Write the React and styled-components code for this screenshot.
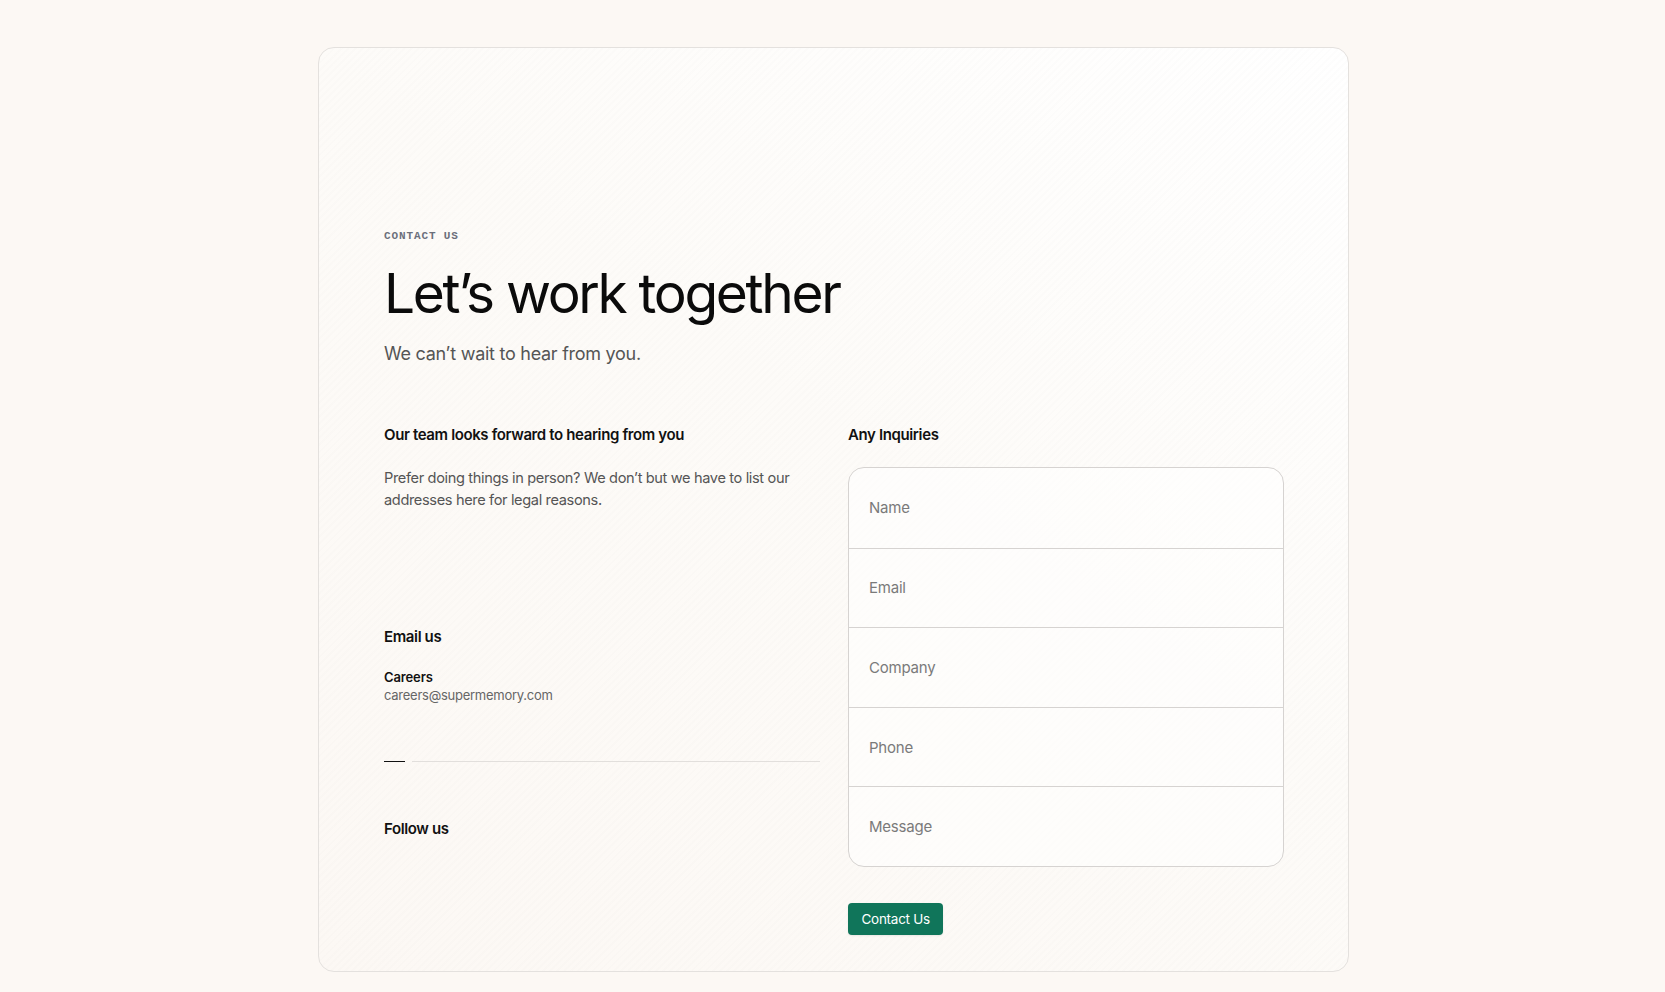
import React from "react";
import styled, { createGlobalStyle } from "styled-components";

const Global = createGlobalStyle`
  html, body { margin: 0; padding: 0; }
  body {
    background: #fcf8f4;
    font-family: Inter, "Noto Sans", sans-serif;
    color: #111;
    -webkit-font-smoothing: antialiased;
  }
  * { box-sizing: border-box; }
`;

const Page = styled.div`
  display: flex;
  justify-content: center;
  padding: 47px 0 20px 2px;
`;

const Card = styled.section`
  width: 1031px;
  border: 1px solid #e4e1de;
  border-radius: 16px;
  padding: 181px 64px 36px 65px;
  background:
    repeating-linear-gradient(135deg, rgba(0,0,0,0.006) 0 2px, rgba(255,255,255,0) 2px 5px),
    linear-gradient(215deg, #ffffff 0%, #fdfbf8 45%, #fcf8f4 100%);
`;

const Eyebrow = styled.div`
  font-family: "Liberation Mono", "DejaVu Sans Mono", monospace;
  font-weight: 700;
  font-size: 11px;
  letter-spacing: 0.08em;
  color: #6b6f7b;
  text-transform: uppercase;
  line-height: 14px;
`;

const Title = styled.h1`
  margin: 18px 0 0;
  font-size: 55px;
  font-weight: 400;
  letter-spacing: -0.042em;
  line-height: 64px;
  color: #0b0b0b;
`;

const Subtitle = styled.p`
  margin: 16px 0 0;
  font-size: 18px;
  line-height: 26px;
  color: #555;
  letter-spacing: -0.015em;
`;

const Columns = styled.div`
  display: grid;
  grid-template-columns: 1fr 1fr;
  column-gap: 28px;
  margin-top: 57px;
`;

const Column = styled.div`
  display: flex;
  flex-direction: column;
`;

const SectionTitle = styled.h3`
  margin: 0;
  font-size: 15px;
  font-weight: 600;
  line-height: 22px;
  color: #111;
  letter-spacing: -0.025em;
`;

const Body = styled.p`
  margin: 21px 0 0;
  font-size: 14.6px;
  line-height: 22px;
  color: #555;
  letter-spacing: -0.025em;
`;

const EmailBlock = styled.div`
  margin-top: 115px;
`;

const ContactItem = styled.div`
  margin-top: 20px;
  display: flex;
  flex-direction: column;
`;

const ItemLabel = styled.span`
  font-size: 13px;
  font-weight: 600;
  line-height: 18px;
  color: #111;
  letter-spacing: -0.01em;
`;

const ItemValue = styled.span`
  font-size: 13px;
  line-height: 18px;
  color: #666;
  letter-spacing: -0.02em;
`;

const Divider = styled.div`
  display: flex;
  align-items: center;
  gap: 7px;
  margin-top: 57px;
`;

const DividerAccent = styled.span`
  width: 21px;
  height: 1px;
  background: #111;
`;

const DividerLine = styled.span`
  flex: 1;
  height: 1px;
  background: #e2dfdc;
`;

const FollowTitle = styled(SectionTitle)`
  margin-top: 56px;
`;

const Form = styled.form`
  margin-top: 21px;
  display: flex;
  flex-direction: column;
  align-items: flex-start;
`;

const Fields = styled.div`
  width: 100%;
  border: 1px solid #d6d3d1;
  border-radius: 16px;
  overflow: hidden;
  background: rgba(255, 255, 255, 0.5);
`;

const Field = styled.input`
  display: block;
  width: 100%;
  height: 79.6px;
  border: none;
  border-top: ${(p) => (p.$first ? "none" : "1px solid #d6d3d1")};
  background: transparent;
  padding: 0 20px;
  font-family: inherit;
  font-size: 15px;
  letter-spacing: -0.015em;
  color: #111;
  outline: none;
  &::placeholder { color: #7a7a7a; }
`;

const Button = styled.button`
  margin-top: 36px;
  height: 32px;
  padding: 0 13.5px;
  border: none;
  border-radius: 4px;
  background: #10755a;
  color: #fff;
  font-family: inherit;
  font-size: 13.5px;
  letter-spacing: -0.02em;
  cursor: pointer;
  box-shadow: 0 1px 2px rgba(0,0,0,0.08);
`;

export default function App() {
  const fields = ["Name", "Email", "Company", "Phone", "Message"];
  return (
    <>
      <Global />
      <Page>
        <Card>
          <Eyebrow>Contact us</Eyebrow>
          <Title>Let’s work together</Title>
          <Subtitle>We can’t wait to hear from you.</Subtitle>
          <Columns>
            <Column>
              <SectionTitle>Our team looks forward to hearing from you</SectionTitle>
              <Body>
                Prefer doing things in person? We don’t but we have to list our
                addresses here for legal reasons.
              </Body>
              <EmailBlock>
                <SectionTitle>Email us</SectionTitle>
                <ContactItem>
                  <ItemLabel>Careers</ItemLabel>
                  <ItemValue>careers@supermemory.com</ItemValue>
                </ContactItem>
              </EmailBlock>
              <Divider>
                <DividerAccent />
                <DividerLine />
              </Divider>
              <FollowTitle>Follow us</FollowTitle>
            </Column>
            <Column>
              <SectionTitle>Any Inquiries</SectionTitle>
              <Form onSubmit={(e) => e.preventDefault()}>
                <Fields>
                  {fields.map((f, i) => (
                    <Field key={f} $first={i === 0} placeholder={f} aria-label={f} />
                  ))}
                </Fields>
                <Button type="submit">Contact Us</Button>
              </Form>
            </Column>
          </Columns>
        </Card>
      </Page>
    </>
  );
}
